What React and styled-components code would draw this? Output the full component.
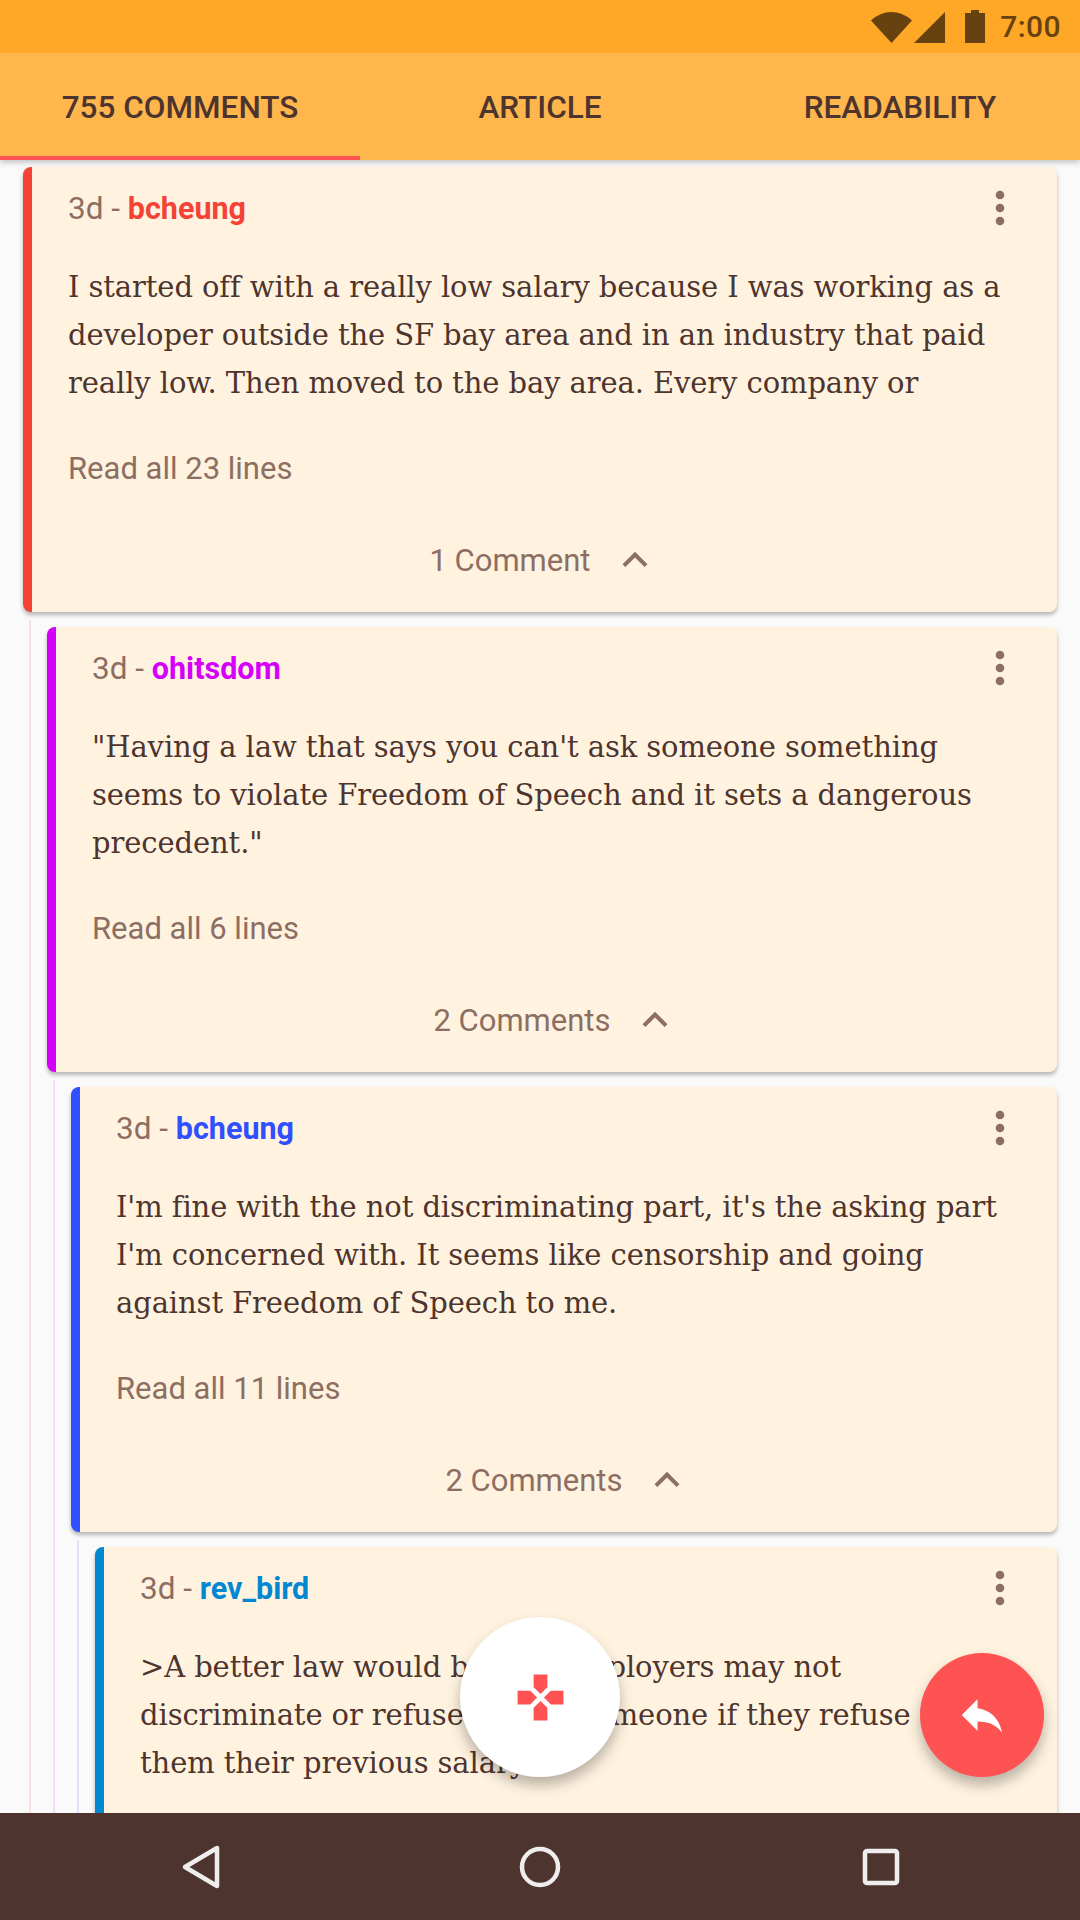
import React from 'react'
import styled, { createGlobalStyle } from 'styled-components'

const GlobalStyle = createGlobalStyle`
    html, body {
        margin: 0;
        padding: 0;
        background: #fafafa;
    }
    * {
        box-sizing: border-box;
    }
`

const Screen = styled.div`
    width: 1080px;
    height: 1920px;
    display: flex;
    flex-direction: column;
    position: relative;
    overflow: hidden;
    background: #fafafa;
    font-family: Roboto, "Liberation Sans", sans-serif;
`
const StatusBar = styled.div`
    height: 53px;
    flex-shrink: 0;
    background: #ffa726;
    color: #664210;
    display: flex;
    align-items: center;
    justify-content: flex-end;
    padding-right: 19px;
    position: relative;
    z-index: 3;
`
const StatusTime = styled.span`
    font-size: 30px;
    font-weight: 500;
    margin-left: 15px;
    letter-spacing: 0.4px;
`
const Tabs = styled.div`
    height: 107px;
    flex-shrink: 0;
    display: flex;
    background: #ffb74d;
    box-shadow: 0 2px 6px rgba(0, 0, 0, 0.25);
    position: relative;
    z-index: 2;
`
const Tab = styled.div`
    width: 360px;
    display: flex;
    align-items: center;
    justify-content: center;
    padding-top: 6px;
    font-size: 31.5px;
    font-weight: 500;
    color: #4e342e;
    border-bottom: 4px solid ${props => props.active ? '#ff5252' : 'transparent'};
`
const List = styled.div`
    flex: 1;
    min-height: 0;
    overflow: hidden;
    padding: 7px 23px 0;
`
const Thread = styled.div`
    margin-left: ${props => props.nested ? '6px' : '0'};
    padding-left: ${props => props.nested ? '16px' : '0'};
    padding-top: ${props => props.nested ? '7px' : '0'};
    margin-top: ${props => props.nested ? '8px' : '0'};
    border-left: ${props => props.nested ? `2px solid ${props.line}` : 'none'};
`
const Card = styled.div`
    height: 445px;
    background: #fff3e0;
    border-left: 9px solid ${props => props.color};
    border-radius: 8px;
    box-shadow: 0 3px 4px rgba(0, 0, 0, 0.28);
    display: flex;
    flex-direction: column;
`
const CardContent = styled.div`
    padding-left: 36px;
`
const CardHead = styled.div`
    height: 83px;
    display: flex;
    align-items: center;
    justify-content: space-between;
    padding-right: 31px;
`
const Meta = styled.div`
    font-size: 31.5px;
    color: #8d6e63;
`
const Author = styled.span`
    font-size: 30.5px;
    font-weight: 700;
    color: ${props => props.color};
`
const MenuIcon = styled.svg`
    width: 52px;
    height: 52px;
    margin-bottom: 2px;
    fill: #8d6e63;
`
const Body = styled.div`
    padding-top: 13px;
    font-family: "DejaVu Serif", serif;
    font-size: 29px;
    line-height: 48px;
    letter-spacing: -0.1px;
    color: #4e342e;
`
const Line = styled.div`
    white-space: nowrap;
`
const ReadAll = styled.div`
    margin-top: 38px;
    font-size: 31px;
    line-height: 48px;
    color: #8d6e63;
`
const Footer = styled.div`
    margin-top: 43px;
    display: flex;
    align-items: center;
    justify-content: center;
    gap: 19px;
    height: 48px;
    font-size: 31px;
    color: #8d6e63;
`
const Chevron = styled.svg`
    width: 50px;
    height: 50px;
    fill: #8d6e63;
`
const Fab = styled.div`
    position: absolute;
    border-radius: 50%;
    display: flex;
    align-items: center;
    justify-content: center;
    box-shadow: 0 8px 14px rgba(0, 0, 0, 0.28);
    z-index: 1;
    left: ${props => props.left}px;
    top: ${props => props.top}px;
    width: ${props => props.size}px;
    height: ${props => props.size}px;
    background: ${props => props.bg};
`
const NavBar = styled.div`
    height: 107px;
    flex-shrink: 0;
    background: #4e342e;
    display: grid;
    grid-template-columns: repeat(3, 1fr);
    position: relative;
    z-index: 2;
`
const NavItem = styled.div`
    display: flex;
    align-items: center;
    justify-content: ${props => props.align};
    padding-left: ${props => props.pl || 0}px;
    padding-right: ${props => props.pr || 0}px;
`
const NavIcon = styled.svg`
    width: 48px;
    height: 48px;
    fill: none;
    stroke: #eeeeee;
    stroke-width: 4.5;
    stroke-linejoin: round;
`

const comments = [
    {
        color: '#f44336',
        line: '#fde0e0',
        author: 'bcheung',
        lines: [
            'I started off with a really low salary because I was working as a',
            'developer outside the SF bay area and in an industry that paid',
            'really low. Then moved to the bay area. Every company or',
        ],
        count: 23,
        replies: '1 Comment',
    },
    {
        color: '#d500f9',
        line: '#f6dcfb',
        author: 'ohitsdom',
        lines: [
            '"Having a law that says you can\'t ask someone something',
            'seems to violate Freedom of Speech and it sets a dangerous',
            'precedent."',
        ],
        count: 6,
        replies: '2 Comments',
    },
    {
        color: '#304ffe',
        line: '#dde3fd',
        author: 'bcheung',
        lines: [
            "I'm fine with the not discriminating part, it's the asking part",
            "I'm concerned with. It seems like censorship and going",
            'against Freedom of Speech to me.',
        ],
        count: 11,
        replies: '2 Comments',
    },
    {
        // the rest of this one is under the nav bar
        color: '#0288d1',
        author: 'rev_bird',
        lines: [
            '>A better law would be that employers may not',
            'discriminate or refuse to hire someone if they refuse to',
            'them their previous salary',
        ],
    },
]

const Comment = ({ item }) => (
    <Card color={item.color}>
        <CardContent>
            <CardHead>
                <Meta>3d - <Author color={item.color}>{item.author}</Author></Meta>
                <MenuIcon viewBox="0 0 24 24">
                    <path d="M12 8c1.1 0 2-.9 2-2s-.9-2-2-2-2 .9-2 2 .9 2 2 2zm0 2c-1.1 0-2 .9-2 2s.9 2 2 2 2-.9 2-2-.9-2-2-2zm0 6c-1.1 0-2 .9-2 2s.9 2 2 2 2-.9 2-2-.9-2-2-2z" />
                </MenuIcon>
            </CardHead>
            <Body>
                {item.lines.map((text) => <Line key={text}>{text}</Line>)}
            </Body>
            {item.count && <ReadAll>Read all {item.count} lines</ReadAll>}
        </CardContent>
        {item.replies && (
            <Footer>
                <span>{item.replies}</span>
                <Chevron viewBox="0 0 24 24">
                    <path d="M12 8l-6 6 1.41 1.41L12 10.83l4.59 4.58L18 14z" />
                </Chevron>
            </Footer>
        )}
    </Card>
)

// each reply sits inside its parent's thread, so the guide lines run on down the page
const CommentThread = ({ items, line }) => {
    const [item, ...rest] = items
    return (
        <Thread nested={!!line} line={line}>
            <Comment item={item} />
            {rest.length > 0 && <CommentThread items={rest} line={item.line} />}
        </Thread>
    )
}

const App = () => {
    return (
        <Screen>
            <GlobalStyle />
            <StatusBar>
                <svg width="41" height="32" viewBox="0 0 41 32" fill="#664210">
                    <path d="M0 9.5C6 4 13 1 20.500 1S35 4 41 9.500L20.500 32z" />
                </svg>
                <svg width="32" height="32" viewBox="0 0 32 32" fill="#664210" style={{ marginLeft: 2 }}>
                    <path d="M31 1v31H0z" />
                </svg>
                <svg width="20" height="33" viewBox="0 0 20 33" fill="#664210" style={{ marginLeft: 19 }}>
                    <path d="M6 0h8v3h6v30H0V3h6z" />
                </svg>
                <StatusTime>7:00</StatusTime>
            </StatusBar>
            <Tabs>
                <Tab active>755 COMMENTS</Tab>
                <Tab>ARTICLE</Tab>
                <Tab>READABILITY</Tab>
            </Tabs>
            <List>
                <CommentThread items={comments} />
            </List>
            <Fab left={460} top={1617} size={160} bg="#ffffff">
                <svg width="55" height="55" viewBox="0 0 24 24" fill="#ff5252">
                    <path d="M15 7.5V2H9v5.5l3 3 3-3zM7.5 9H2v6h5.5l3-3-3-3zM9 16.5V22h6v-5.5l-3-3-3 3zM16.5 9l-3 3 3 3H22V9h-5.5z" />
                </svg>
            </Fab>
            <Fab left={920} top={1653} size={124} bg="#ff5252">
                <svg width="54" height="54" viewBox="0 0 24 24" fill="#ffffff">
                    <path d="M10 9V5l-7 7 7 7v-4.1c5 0 8.5 1.6 11 5.1-1-5-4-10-11-11z" />
                </svg>
            </Fab>
            <NavBar>
                <NavItem align="flex-end" pr={134}>
                    <NavIcon viewBox="0 0 48 48"><path d="M39 5v38L7 24z" /></NavIcon>
                </NavItem>
                <NavItem align="center">
                    <NavIcon viewBox="0 0 48 48"><circle cx="24" cy="24" r="18" /></NavIcon>
                </NavItem>
                <NavItem align="flex-start" pl={137}>
                    <NavIcon viewBox="0 0 48 48"><rect x="8" y="8" width="32" height="32" rx="2" /></NavIcon>
                </NavItem>
            </NavBar>
        </Screen>
    )
}

export default App
